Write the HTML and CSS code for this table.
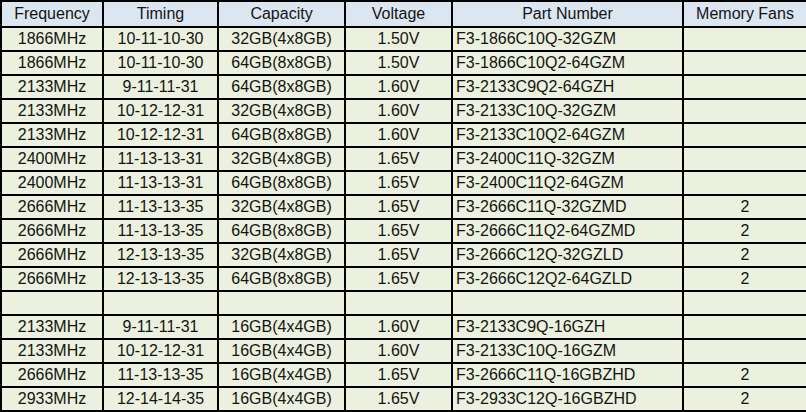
FILE: index.html
```html
<!DOCTYPE html>
<html>
<head>
<meta charset="utf-8">
<link rel="stylesheet" href="styles.css">
</head>
<body>
<table class="spec">
<colgroup>
<col class="c1"><col class="c2"><col class="c3"><col class="c4"><col class="c5"><col class="c6">
</colgroup>
<thead>
<tr><th>Frequency</th><th>Timing</th><th>Capacity</th><th>Voltage</th><th>Part Number</th><th>Memory Fans</th></tr>
</thead>
<tbody>
<tr><td>1866MHz</td><td>10-11-10-30</td><td>32GB(4x8GB)</td><td>1.50V</td><td class="pn">F3-1866C10Q-32GZM</td><td></td></tr>
<tr><td>1866MHz</td><td>10-11-10-30</td><td>64GB(8x8GB)</td><td>1.50V</td><td class="pn">F3-1866C10Q2-64GZM</td><td></td></tr>
<tr><td>2133MHz</td><td>9-11-11-31</td><td>64GB(8x8GB)</td><td>1.60V</td><td class="pn">F3-2133C9Q2-64GZH</td><td></td></tr>
<tr><td>2133MHz</td><td>10-12-12-31</td><td>32GB(4x8GB)</td><td>1.60V</td><td class="pn">F3-2133C10Q-32GZM</td><td></td></tr>
<tr><td>2133MHz</td><td>10-12-12-31</td><td>64GB(8x8GB)</td><td>1.60V</td><td class="pn">F3-2133C10Q2-64GZM</td><td></td></tr>
<tr><td>2400MHz</td><td>11-13-13-31</td><td>32GB(4x8GB)</td><td>1.65V</td><td class="pn">F3-2400C11Q-32GZM</td><td></td></tr>
<tr><td>2400MHz</td><td>11-13-13-31</td><td>64GB(8x8GB)</td><td>1.65V</td><td class="pn">F3-2400C11Q2-64GZM</td><td></td></tr>
<tr><td>2666MHz</td><td>11-13-13-35</td><td>32GB(4x8GB)</td><td>1.65V</td><td class="pn">F3-2666C11Q-32GZMD</td><td>2</td></tr>
<tr><td>2666MHz</td><td>11-13-13-35</td><td>64GB(8x8GB)</td><td>1.65V</td><td class="pn">F3-2666C11Q2-64GZMD</td><td>2</td></tr>
<tr><td>2666MHz</td><td>12-13-13-35</td><td>32GB(4x8GB)</td><td>1.65V</td><td class="pn">F3-2666C12Q-32GZLD</td><td>2</td></tr>
<tr><td>2666MHz</td><td>12-13-13-35</td><td>64GB(8x8GB)</td><td>1.65V</td><td class="pn">F3-2666C12Q2-64GZLD</td><td>2</td></tr>
<tr><td></td><td></td><td></td><td></td><td class="pn"></td><td></td></tr>
<tr><td>2133MHz</td><td>9-11-11-31</td><td>16GB(4x4GB)</td><td>1.60V</td><td class="pn">F3-2133C9Q-16GZH</td><td></td></tr>
<tr><td>2133MHz</td><td>10-12-12-31</td><td>16GB(4x4GB)</td><td>1.60V</td><td class="pn">F3-2133C10Q-16GZM</td><td></td></tr>
<tr><td>2666MHz</td><td>11-13-13-35</td><td>16GB(4x4GB)</td><td>1.65V</td><td class="pn">F3-2666C11Q-16GBZHD</td><td>2</td></tr>
<tr><td>2933MHz</td><td>12-14-14-35</td><td>16GB(4x4GB)</td><td>1.65V</td><td class="pn">F3-2933C12Q-16GBZHD</td><td>2</td></tr>
</tbody>
</table>
</body>
</html>
```
FILE: styles.css
```css
html, body {
  margin: 0;
  padding: 0;
  background: #ffffff;
}
.spec {
  border-collapse: collapse;
  table-layout: fixed;
  width: 806px;
  font-family: "Liberation Sans", Arial, sans-serif;
  font-size: 16px;
  color: #141414;
}
.c1 { width: 102px; }
.c2 { width: 115px; }
.c3 { width: 127px; }
.c4 { width: 107px; }
.c5 { width: 231px; }
.c6 { width: 124px; }
.spec th, .spec td {
  border: 2px solid #000;
  padding: 0 2px;
  text-align: center;
  font-weight: normal;
  height: 22px;
  line-height: 22px;
  white-space: nowrap;
  overflow: hidden;
  box-sizing: content-box;
}
.spec th {
  background: #dce6f1;
  height: 24px;
  line-height: 24px;
}
.spec td {
  background: #ebf1de;
}
.spec td.pn {
  text-align: left;
  padding-left: 3px;
}
```
